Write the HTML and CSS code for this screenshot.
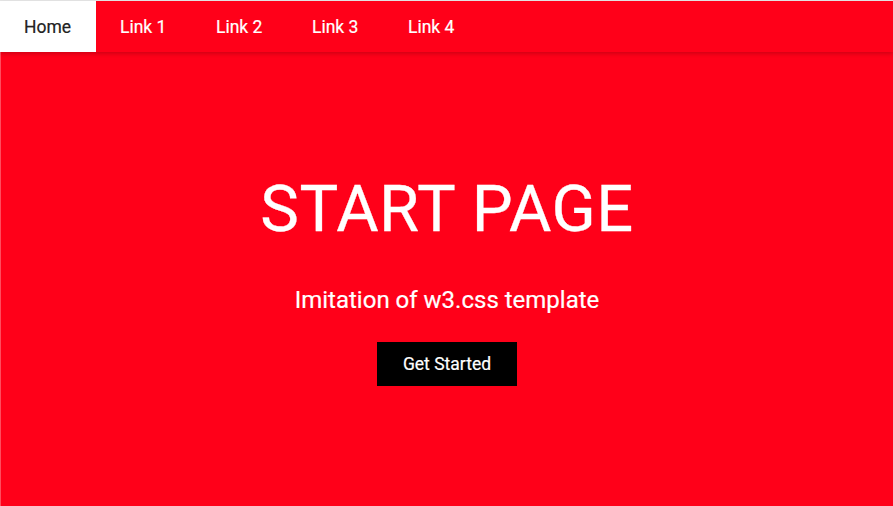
FILE: index.html
```html
<!DOCTYPE html>
<html>
<head>
<meta charset="utf-8">
<link rel="stylesheet" href="styles.css">
</head>
<body>
<div class="page">
  <nav class="nav">
    <a class="nav-item active" href="#">Home</a>
    <a class="nav-item" href="#">Link 1</a>
    <a class="nav-item" href="#">Link 2</a>
    <a class="nav-item" href="#">Link 3</a>
    <a class="nav-item" href="#">Link 4</a>
  </nav>
  <header class="hero">
    <h1 class="title">START PAGE</h1>
    <p class="subtitle">Imitation of w3.css template</p>
    <a class="btn" href="#">Get Started</a>
  </header>
</div>
</body>
</html>
```
FILE: styles.css
```css
html, body {
  margin: 0;
  padding: 0;
  height: 100%;
}
body {
  font-family: Roboto, "Liberation Sans", sans-serif;
  background: #ff0019;
  color: #fff;
}
.page {
  border-top: 1px solid #e6e6e6;
  min-height: 505px;
  display: flex;
  flex-direction: column;
}
.nav {
  display: flex;
  height: 51px;
  background: #ff0019;
  box-shadow: 0 2px 4px rgba(0,0,0,0.18);
  position: relative;
  z-index: 1;
}
.nav-item {
  display: flex;
  align-items: center;
  width: 96px;
  box-sizing: border-box;
  padding: 0 24px;
  color: #fff;
  text-decoration: none;
  font-size: 17.5px;
  -webkit-text-stroke: 0.2px #fff;
}
.nav-item.active {
  background: #fff;
  color: #222;
  -webkit-text-stroke: 0.2px #222;
}
.hero {
  flex: 1;
  display: flex;
  flex-direction: column;
  align-items: center;
  border-left: 1px solid #ff4d5e;
}
.title {
  margin: 119px 0 0;
  font-weight: 400;
  font-size: 65px;
  line-height: 76px;
  letter-spacing: 0.5px;
  -webkit-text-stroke: 0.3px #fff;
}
.subtitle {
  margin: 38px 0 0;
  font-size: 24px;
  line-height: 30px;
  -webkit-text-stroke: 0.2px #fff;
}
.btn {
  margin-top: 27px;
  display: block;
  width: 140px;
  height: 44px;
  line-height: 44px;
  text-align: center;
  background: #000;
  color: #fff;
  text-decoration: none;
  font-size: 17.5px;
  -webkit-text-stroke: 0.2px #fff;
}
```
